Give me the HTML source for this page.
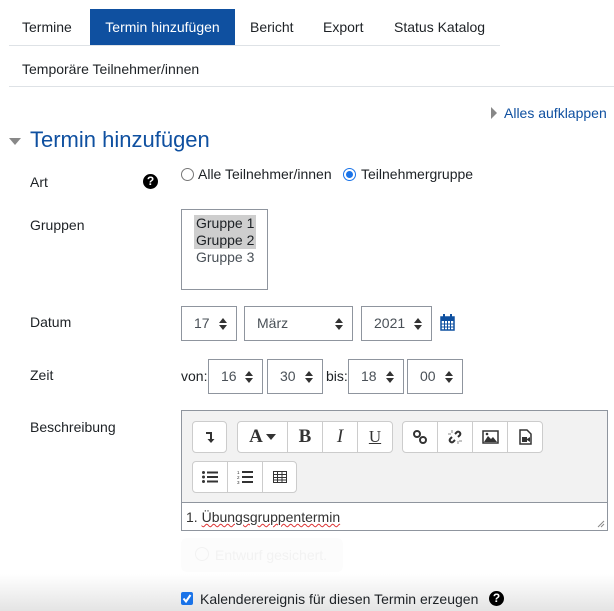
<!DOCTYPE html>
<html><head><meta charset="utf-8"><style>
*{box-sizing:border-box;margin:0;padding:0}
body{width:614px;height:611px;position:relative;overflow:hidden;background:#fff;font-family:"Liberation Sans",sans-serif;font-size:14px;color:#1d2125}
.a{position:absolute;white-space:nowrap}
.grad{position:absolute;left:0;top:574px;width:614px;height:37px;background:linear-gradient(#fff,#e4e4e4)}
.sel{position:absolute;border:1px solid #8f959e;height:35px;background:#fff;color:#495057;font-size:14px;line-height:33px;padding-left:12px}
.sel svg{position:absolute;right:9px;top:11px}
.btn{position:absolute;border:1px solid #ccc;background:#fff;height:32px}
.btn div{position:absolute;top:0;height:30px;border-right:1px solid #ccc;display:flex;align-items:center;justify-content:center}
.btn div:last-child{border-right:none}
.help{position:absolute;width:15px;height:15px;border-radius:50%;background:#000;color:#fff;font-size:12px;font-weight:bold;text-align:center;line-height:15px}
</style></head><body>
<div class="grad"></div>
<div class="a" style="left:9px;top:45px;width:491px;height:1px;background:#dee2e6"></div>
<div class="a" style="left:22px;top:19px">Termine</div>
<div class="a" style="left:90px;top:9px;width:145px;height:36px;background:#0f50a0;color:#fff;line-height:36px;text-align:center">Termin hinzufügen</div>
<div class="a" style="left:250px;top:19px">Bericht</div>
<div class="a" style="left:323px;top:19px">Export</div>
<div class="a" style="left:394px;top:19px">Status Katalog</div>
<div class="a" style="left:22px;top:61px">Temporäre Teilnehmer/innen</div>
<div class="a" style="left:9px;top:86px;width:605px;height:1px;background:#dee2e6"></div>
<svg class="a" style="left:491px;top:107px" width="6" height="12"><path d="M0 0L6 6L0 12Z" fill="#888"/></svg>
<div class="a" style="left:504px;top:105px;color:#0f50a0">Alles aufklappen</div>
<svg class="a" style="left:9px;top:138px" width="12" height="7"><path d="M0 0H12L6 7Z" fill="#888"/></svg>
<div class="a" style="left:30px;top:127px;font-size:22px;color:#0f50a0">Termin hinzufügen</div>
<div class="a" style="left:30px;top:174px">Art</div>
<div class="help" style="left:143px;top:174px">?</div>
<div class="a" style="left:181px;top:168px;width:13px;height:13px;border:1px solid #777;border-radius:50%"></div>
<div class="a" style="left:198px;top:166px">Alle Teilnehmer/innen</div>
<div class="a" style="left:343px;top:168px;width:13px;height:13px;border:1px solid #1a73e8;border-radius:50%;background:#fff"><div style="margin:2px;width:7px;height:7px;border-radius:50%;background:#1a73e8"></div></div>
<div class="a" style="left:361px;top:166px">Teilnehmergruppe</div>
<div class="a" style="left:30px;top:217px">Gruppen</div>
<div class="a" style="left:181px;top:209px;width:87px;height:81px;border:1px solid #8f959e"></div>
<div class="a" style="left:194px;top:215px;width:62px;height:34px;background:#cecece"></div>
<div class="a" style="left:196px;top:215px;line-height:17px">Gruppe 1<br>Gruppe 2<br><span style="color:#495057">Gruppe 3</span></div>
<div class="a" style="left:30px;top:314px">Datum</div>
<div class="sel" style="left:181px;top:306px;width:56px">17<svg width="8" height="12"><path d="M0 5L4 0L8 5ZM0 7L4 12L8 7Z" fill="#333"/></svg></div>
<div class="sel" style="left:244px;top:306px;width:109px">März<svg width="8" height="12"><path d="M0 5L4 0L8 5ZM0 7L4 12L8 7Z" fill="#333"/></svg></div>
<div class="sel" style="left:361px;top:306px;width:71px">2021<svg width="8" height="12"><path d="M0 5L4 0L8 5ZM0 7L4 12L8 7Z" fill="#333"/></svg></div>
<svg class="a" style="left:440px;top:314px" width="15" height="17"><path d="M1 3H14V16H1Z" fill="none" stroke="#0f50a0" stroke-width="1.5"/><path d="M1 3H14V7H1Z" fill="#0f50a0"/><path d="M4 0V4M11 0V4" stroke="#0f50a0" stroke-width="2"/><path d="M1 10H14M1 13H14M4.5 7V16M7.5 7V16M10.5 7V16" stroke="#0f50a0" stroke-width="1"/></svg>
<div class="a" style="left:30px;top:367px">Zeit</div>
<div class="a" style="left:181px;top:368px">von:</div>
<div class="sel" style="left:208px;top:359px;width:55px">16<svg width="8" height="12"><path d="M0 5L4 0L8 5ZM0 7L4 12L8 7Z" fill="#333"/></svg></div>
<div class="sel" style="left:267px;top:359px;width:56px">30<svg width="8" height="12"><path d="M0 5L4 0L8 5ZM0 7L4 12L8 7Z" fill="#333"/></svg></div>
<div class="a" style="left:326px;top:368px">bis:</div>
<div class="sel" style="left:348px;top:359px;width:56px">18<svg width="8" height="12"><path d="M0 5L4 0L8 5ZM0 7L4 12L8 7Z" fill="#333"/></svg></div>
<div class="sel" style="left:407px;top:359px;width:56px">00<svg width="8" height="12"><path d="M0 5L4 0L8 5ZM0 7L4 12L8 7Z" fill="#333"/></svg></div>
<div class="a" style="left:30px;top:419px">Beschreibung</div>
<div class="a" style="left:181px;top:410px;width:427px;height:121px;border:1px solid #8f959e;background:#f2f2f2"></div>
<div class="a" style="left:182px;top:502px;width:425px;height:28px;background:#fff;border-top:1px solid #8f959e"></div>
<div class="a" style="left:186px;top:509px;color:#333">1. <span style="text-decoration:underline wavy #d33;text-decoration-thickness:1px">Übungsgruppentermin</span></div>
<svg class="a" style="left:597px;top:520px" width="8" height="8"><path d="M7 1L1 7M7 4L4 7" stroke="#888"/></svg>
<div class="btn" style="left:192px;top:421px;width:35px;border-radius:4px"><div style="left:0;width:33px"><svg width="10" height="12"><path d="M1 2H6V10" fill="none" stroke="#333" stroke-width="2"/><path d="M2.5 8H9.5L6 12Z" fill="#333"/></svg></div></div>
<div class="btn" style="left:237px;top:421px;width:156px;border-radius:4px">
<div style="left:0;width:50px;font-family:'Liberation Serif',serif;font-weight:bold;font-size:19px;color:#333">A<svg width="10" height="6" style="margin-left:3px"><path d="M0 0H10L5 6Z" fill="#333"/></svg></div>
<div style="left:50px;width:35px;font-family:'Liberation Serif',serif;font-weight:bold;font-size:19px;color:#333">B</div>
<div style="left:85px;width:35px;font-family:'Liberation Serif',serif;font-style:italic;font-size:19px;color:#333">I</div>
<div style="left:120px;width:34px;font-family:'Liberation Serif',serif;font-size:17px;color:#333;text-decoration:underline">U</div></div>
<div class="btn" style="left:402px;top:421px;width:141px;border-radius:4px">
<div style="left:0;width:35px"><svg width="14" height="14"><circle cx="4" cy="4" r="3" fill="none" stroke="#333" stroke-width="2"/><circle cx="10" cy="10" r="3" fill="none" stroke="#333" stroke-width="2"/></svg></div>
<div style="left:35px;width:35px"><svg width="16" height="16"><path d="M8 5L10 3A2.2 2.2 0 0 1 13 6L11 8" fill="none" stroke="#333" stroke-width="2"/><path d="M8 11L6 13A2.2 2.2 0 0 1 3 10L5 8" fill="none" stroke="#333" stroke-width="2"/><path d="M5 1V4M1 5H4M12 12H15M11 12V15" stroke="#888"/></svg></div>
<div style="left:70px;width:35px"><svg width="17" height="14"><rect x="1" y="1" width="15" height="12" fill="none" stroke="#333" stroke-width="1.5"/><path d="M2 12L6 6L9 9L11 7L15 12Z" fill="#333"/><circle cx="5" cy="4" r="1.3" fill="#333"/></svg></div>
<div style="left:105px;width:34px"><svg width="13" height="16"><path d="M1 1H8L12 5V15H1Z" fill="none" stroke="#333" stroke-width="1.5"/><path d="M3 8H8V13H3ZM8 10L11 8V13L8 11Z" fill="#333"/></svg></div></div>
<div class="btn" style="left:192px;top:461px;width:105px;border-radius:4px">
<div style="left:0;width:35px"><svg width="16" height="12"><circle cx="1.5" cy="1.5" r="1.5" fill="#333"/><circle cx="1.5" cy="6" r="1.5" fill="#333"/><circle cx="1.5" cy="10.5" r="1.5" fill="#333"/><path d="M5 1.5H16M5 6H16M5 10.5H16" stroke="#333" stroke-width="2"/></svg></div>
<div style="left:35px;width:35px"><svg width="16" height="14"><text x="0" y="4" font-size="4.5" fill="#333" font-family="Liberation Sans">1</text><text x="0" y="9" font-size="4.5" fill="#333" font-family="Liberation Sans">2</text><text x="0" y="14" font-size="4.5" fill="#333" font-family="Liberation Sans">3</text><path d="M5 2H16M5 7H16M5 12H16" stroke="#333" stroke-width="2"/></svg></div>
<div style="left:70px;width:34px"><svg width="14" height="12"><rect x="0.5" y="0.5" width="13" height="11" fill="none" stroke="#333"/><path d="M0 3.5H14M0 6.5H14M0 9H14M4.5 0V12M9 0V12" stroke="#333"/></svg></div></div>
<div class="a" style="left:181px;top:538px;width:162px;height:34px;background:#fcfcfc;border-radius:6px"></div>
<div class="a" style="left:195px;top:547px;width:14px;height:14px;border:1px solid #f2f2f2;border-radius:50%"></div>
<div class="a" style="left:215px;top:547px;color:#f2f2f2">Entwurf gesichert.</div>
<div class="a" style="left:181px;top:592px;width:12px;height:13px;background:#1a73e8;border-radius:2px"><svg width="12" height="13" style="display:block"><path d="M2.5 6.5L5 9.5L9.5 3" fill="none" stroke="#fff" stroke-width="2"/></svg></div>
<div class="a" style="left:200px;top:591px">Kalenderereignis für diesen Termin erzeugen</div>
<div class="help" style="left:489px;top:591px">?</div>
</body></html>
